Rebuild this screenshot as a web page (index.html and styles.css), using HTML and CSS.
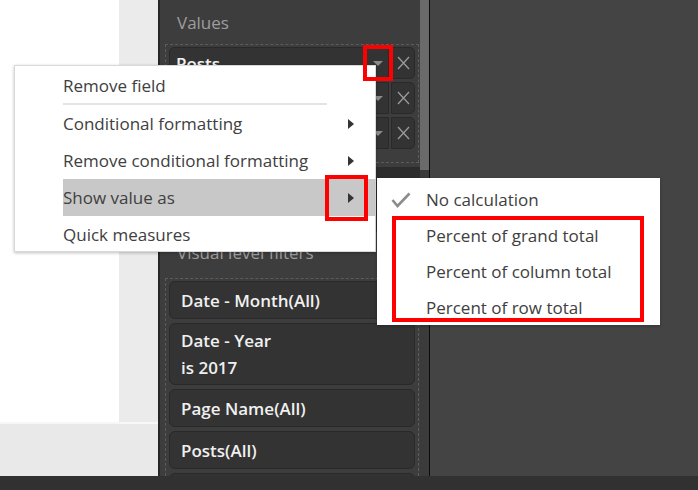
FILE: index.html
```html
<!DOCTYPE html>
<html>
<head>
<meta charset="utf-8">
<link rel="stylesheet" href="styles.css">
</head>
<body>
<div class="app">
  <div class="main">
    <div class="canvas-col">
      <div class="canvas">
        <div class="page"></div>
        <div class="gutter"></div>
      </div>
      <div class="canvas-foot"></div>
    </div>
    <div class="pane">
      <div class="pane-body">
        <div class="section-title values-title">Values</div>
        <div class="well values-well">
          <div class="field">
            <div class="field-main"><span class="field-name">Posts</span><span class="caret"></span></div>
            <div class="field-x"><svg width="13" height="14" viewBox="0 0 13 14"><path d="M1 1 L12 13 M12 1 L1 13" stroke="#9a9a9a" stroke-width="1.3" fill="none"/></svg></div>
          </div>
          <div class="field">
            <div class="field-main"><span class="field-name"></span><span class="caret"></span></div>
            <div class="field-x"><svg width="13" height="14" viewBox="0 0 13 14"><path d="M1 1 L12 13 M12 1 L1 13" stroke="#9a9a9a" stroke-width="1.3" fill="none"/></svg></div>
          </div>
          <div class="field">
            <div class="field-main"><span class="field-name"></span><span class="caret"></span></div>
            <div class="field-x"><svg width="13" height="14" viewBox="0 0 13 14"><path d="M1 1 L12 13 M12 1 L1 13" stroke="#9a9a9a" stroke-width="1.3" fill="none"/></svg></div>
          </div>
        </div>
        <div class="filters-band"></div>
        <div class="section-title filters-title">Visual level filters</div>
        <div class="well filter-well">
          <div class="filter">Date - Month(All)</div>
          <div class="filter two-line">Date - Year<br>is 2017</div>
          <div class="filter">Page Name(All)</div>
          <div class="filter">Posts(All)</div>
          <div class="filter"></div>
        </div>
      </div>
      <div class="scroll"><div class="thumb"></div></div>
    </div>
    <div class="right"></div>
  </div>
  <div class="statusbar"></div>

  <div class="ctx-menu">
    <div class="item first">Remove field</div>
    <div class="sep"></div>
    <div class="item">Conditional formatting<span class="arrow"></span></div>
    <div class="item">Remove conditional formatting<span class="arrow"></span></div>
    <div class="item active">Show value as<span class="arrow"></span></div>
    <div class="item">Quick measures</div>
  </div>

  <div class="submenu">
    <div class="sub-item"><svg class="check" width="20" height="16" viewBox="0 0 20 16"><path d="M1.5 8 L6.5 14 L18.5 1.5" stroke="#8c8c8c" stroke-width="2.6" fill="none"/></svg>No calculation</div>
    <div class="sub-item">Percent of grand total</div>
    <div class="sub-item">Percent of column total</div>
    <div class="sub-item">Percent of row total</div>
  </div>

  <div class="mark mark-caret"></div>
  <div class="mark mark-arrow"></div>
  <div class="mark mark-options"></div>
</div>
</body>
</html>
```
FILE: styles.css
```css
* { box-sizing: border-box; }
html, body { margin: 0; padding: 0; }
body {
  width: 698px;
  height: 490px;
  overflow: hidden;
  font-family: "Open Sans", "Noto Sans", sans-serif;
  font-size: 17px;
}
.app {
  position: relative;
  width: 698px;
  height: 490px;
  display: flex;
  flex-direction: column;
  background: #444444;
}
.main {
  display: flex;
  height: 476px;
  flex-shrink: 0;
}
.canvas-col {
  width: 158px;
  display: flex;
  flex-direction: column;
}
.canvas {
  display: flex;
  height: 422px;
  flex-shrink: 0;
}
.page {
  width: 119px;
  background: #ffffff;
}
.gutter {
  flex: 1;
  background: #ebebeb;
}
.canvas-foot {
  flex: 1;
  background: #e9e9e9;
  border-top: 2px solid #f7f7f7;
}
.pane {
  width: 272px;
  display: flex;
  background: #3d3d3d;
  border-left: 2px solid #262626;
  border-right: 1px solid #0c0c0c;
}
.pane-body {
  width: 260px;
  display: flex;
  flex-direction: column;
  overflow: hidden;
}
.pane-body > * { flex-shrink: 0; }
.scroll {
  width: 9px;
  background: #3b3b3b;
}
.thumb {
  height: 170px;
  background: #6a6a6a;
}
.right {
  flex: 1;
  background: #444444;
}
.statusbar {
  height: 14px;
  background: #313131;
}

.section-title {
  color: #9d9d9d;
  padding-left: 17px;
  display: flex;
  align-items: center;
}
.values-title { height: 44px; padding-top: 1px; }
.filters-title { height: 46px; padding-bottom: 6px; }

.well {
  margin-left: 5px;
  margin-right: 1px;
  border: 1px dashed #5c5c5c;
  padding: 2px 3px;
  display: flex;
  flex-direction: column;
}
.values-well {
  gap: 3px;
  padding-bottom: 13px;
  height: 119px;
}
.field {
  height: 32px;
  flex-shrink: 0;
  display: flex;
  gap: 2px;
}
.field-main {
  flex: 1;
  background: #333333;
  border: 1px solid #292929;
  border-radius: 5px 0 0 5px;
  display: flex;
  align-items: center;
  justify-content: space-between;
  padding: 0 5px 0 6px;
  color: #f2f2f2;
  font-weight: 600;
}
.caret {
  width: 0;
  height: 0;
  border-left: 5px solid transparent;
  border-right: 5px solid transparent;
  border-top: 5px solid #8a8a8a;
}
.field-x {
  width: 24px;
  background: #333333;
  border: 1px solid #292929;
  border-radius: 0 5px 5px 0;
  display: flex;
  align-items: center;
  justify-content: center;
}

.filters-band {
  margin-top: 4px;
  height: 65px;
  background: #2c2c2c;
}

.filter-well {
  flex: 1 1 auto;
  gap: 4px;
  border-bottom: none;
  overflow: hidden;
}
.filter {
  flex: 0 0 38px;
  background: #333333;
  border: 1px solid #292929;
  border-radius: 6px;
  color: #f0f0f0;
  font-weight: 600;
  padding: 0 11px;
  display: flex;
  align-items: center;
}
.filter.two-line {
  flex: 0 0 62px;
  display: block;
  line-height: 27px;
  padding-top: 3px;
}

/* context menu */
.ctx-menu {
  position: absolute;
  left: 14px;
  top: 65px;
  width: 362px;
  height: 187px;
  background: #ffffff;
  border: 1px solid #d9d9d9;
  box-shadow: 0 1px 3px rgba(0,0,0,0.25);
  padding-top: 1px;
  color: #404040;
}
.item {
  margin-left: 48px;
  height: 37px;
  display: flex;
  align-items: center;
  justify-content: space-between;
  padding-right: 21px;
}
.item.first { height: 36px; }
.item.active { background: #c8c8c8; }
.sep {
  margin-left: 48px;
  width: 264px;
  height: 2px;
  background: #e4e4e4;
}
.arrow {
  width: 0;
  height: 0;
  border-top: 5px solid transparent;
  border-bottom: 5px solid transparent;
  border-left: 6px solid #333333;
}

.submenu {
  position: absolute;
  left: 377px;
  top: 178px;
  width: 283px;
  height: 147px;
  background: #ffffff;
  box-shadow: 0 1px 3px rgba(0,0,0,0.25);
  padding-top: 3px;
  color: #404040;
}
.sub-item {
  position: relative;
  height: 36px;
  padding-left: 49px;
  display: flex;
  align-items: center;
}
.check {
  position: absolute;
  left: 14px;
  top: 11px;
}

.mark {
  position: absolute;
  border: 4px solid #ff0000;
}
.mark-caret { left: 363px; top: 45px; width: 30px; height: 36px; }
.mark-arrow { left: 325px; top: 175px; width: 43px; height: 46px; }
.mark-options { left: 392px; top: 216px; width: 252px; height: 106px; }
```
